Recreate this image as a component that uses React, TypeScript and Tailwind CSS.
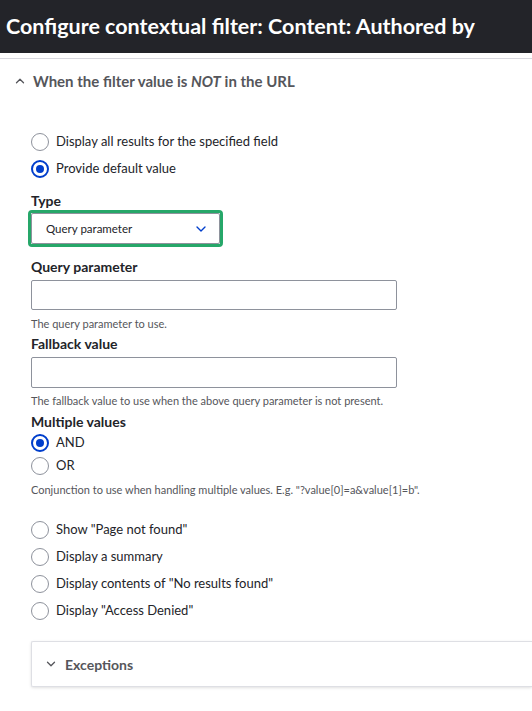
import { ChevronUp, ChevronDown } from 'lucide-react'

const font = { fontFamily: 'Lato, "Noto Sans", sans-serif' }

function Radio({ label, checked = false, h = 'h-[27px]' }: { label: string; checked?: boolean; h?: string }) {
  return (
    <label className={`flex items-center gap-[7px] ${h} text-[13px] text-[#232429]`}>
      {checked ? (
        <span className="w-[18px] h-[18px] rounded-full border-[2px] border-[#003ecc] flex items-center justify-center shrink-0">
          <span className="w-[8px] h-[8px] rounded-full bg-[#003ecc]" />
        </span>
      ) : (
        <span className="w-[18px] h-[18px] rounded-full border border-[#8e929c] shrink-0" />
      )}
      <span>{label}</span>
    </label>
  )
}

export default function App() {
  return (
    <div style={font} className="w-[532px] h-[711px] bg-white overflow-hidden">
      <div className="h-[53px] bg-[#232429] flex items-center px-[6px]">
        <h1 className="text-white font-bold text-[21.5px] whitespace-nowrap">
          Configure contextual filter: Content: Authored by
        </h1>
      </div>
      <div className="mt-[5px] border-t border-[#d8d8de]" />

      <div className="flex items-center h-[44px] pl-[13px] gap-[6px] text-[#55565b] font-bold text-[15px]">
        <ChevronUp size={14} strokeWidth={2.2} />
        <span>
          When the filter value is <em>NOT</em> in the URL
        </span>
      </div>

      <div className="pl-[31px] pt-[25px]">
        <Radio label="Display all results for the specified field" />
        <Radio label="Provide default value" checked />

        <div className="mt-[10px]">
          <div className="text-[14px] font-bold text-[#232429] leading-[18px]">Type</div>
          <div className="-ml-[3px] w-[195px] h-[37px] rounded-[4px] border-[3px] border-[#26a769]">
            <div className="h-full border border-[#8e929c] rounded-[2px] flex items-center justify-between pl-[14px] pr-[10px] text-[11.5px] text-[#232429]">
              <span>Query parameter</span>
              <ChevronDown size={16} strokeWidth={2} className="text-[#003ecc]" />
            </div>
          </div>
        </div>

        <div className="mt-[11px] text-[14px] font-bold text-[#232429] leading-[18px]">Query parameter</div>
        <div className="mt-[4px] w-[366px] h-[30px] border border-[#8e929c] rounded-[2px]" />
        <div className="mt-[6px] text-[11px] text-[#55565b] leading-[16px]">The query parameter to use.</div>

        <div className="mt-[3px] text-[14px] font-bold text-[#232429] leading-[18px]">Fallback value</div>
        <div className="mt-[4px] w-[366px] h-[31px] border border-[#8e929c] rounded-[2px]" />
        <div className="mt-[5px] text-[11px] text-[#55565b] leading-[16px]">
          The fallback value to use when the above query parameter is not present.
        </div>

        <div className="mt-[4px] text-[14px] font-bold text-[#232429] leading-[18px]">Multiple values</div>
        <div className="mt-0">
          <Radio label="AND" checked h="h-[23px]" />
          <Radio label="OR" h="h-[23px]" />
        </div>
        <div className="mt-[5px] text-[11px] text-[#55565b] leading-[16px]">
          Conjunction to use when handling multiple values. E.g. "?value[0]=a&amp;value[1]=b".
        </div>

        <div className="mt-[18px]">
          <Radio label={'Show "Page not found"'} />
          <Radio label="Display a summary" />
          <Radio label={'Display contents of "No results found"'} />
          <Radio label={'Display "Access Denied"'} />
        </div>

        <div className="mt-[17px] h-[46px] border border-[#dedfe4] border-r-0 rounded-l-[2px] shadow-[0_1px_3px_rgba(0,0,0,0.12)] flex items-center pl-[12px] gap-[7px] text-[#55565b] font-bold text-[14px]">
          <ChevronDown size={14} strokeWidth={2.2} />
          <span>Exceptions</span>
        </div>
      </div>
    </div>
  )
}
